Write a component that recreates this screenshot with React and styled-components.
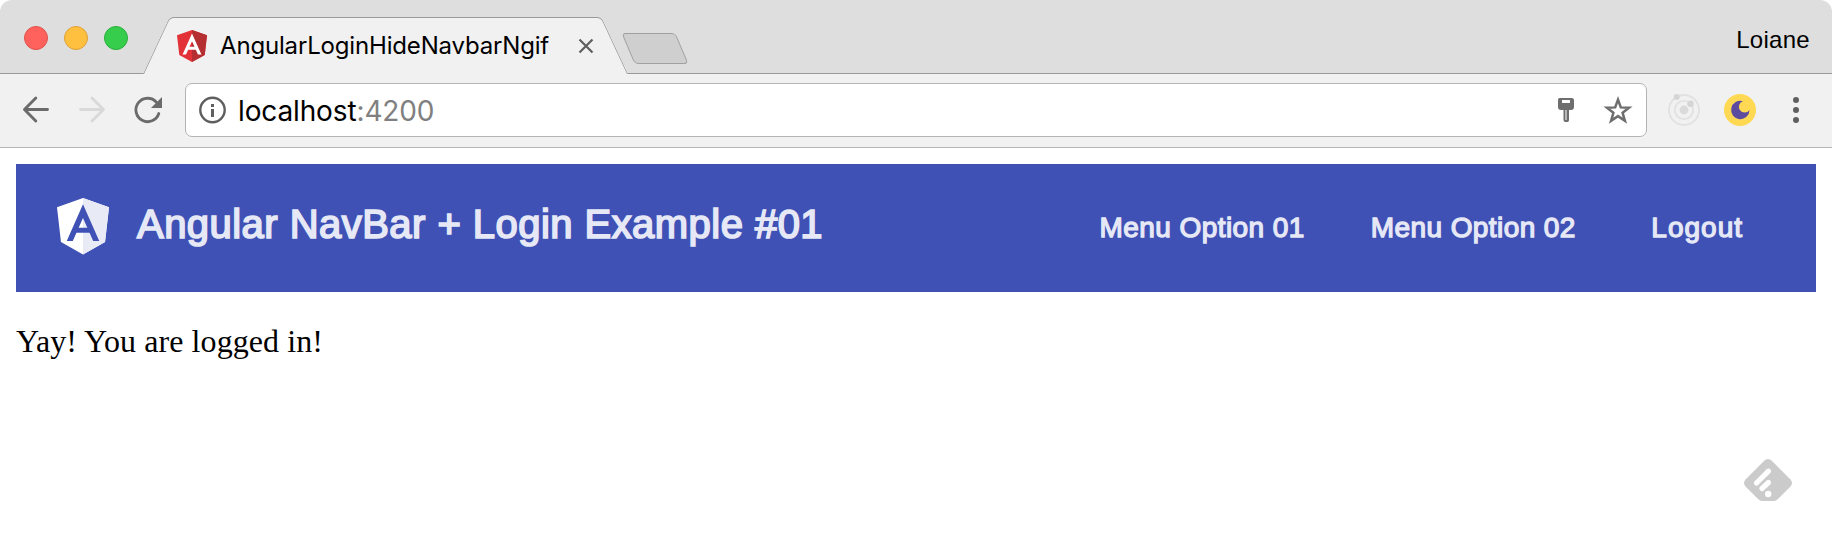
import React from 'react';
import styled, { createGlobalStyle } from 'styled-components';

const GlobalStyle = createGlobalStyle`
  *, *::before, *::after { box-sizing: border-box; }
  body { margin: 0; background: #fff; }
  svg { display: block; flex: none; }
`;

const Window = styled.div`
  position: relative;
  width: 1832px;
  height: 544px;
  overflow: hidden;
  background: #fff;
`;

const TabStrip = styled.header`
  display: flex;
  align-items: flex-end;
  height: 74px;
  padding: 0 22px 0 24px;
  background: #dedede;
  border-bottom: 1px solid #999;
  border-radius: 12px 12px 0 0;
`;

const TrafficLights = styled.div`
  display: flex;
  gap: 16px;
  margin-bottom: 23px;
`;

const Light = styled.span`
  width: 24px;
  height: 24px;
  border-radius: 50%;
  background: ${(p) => p.$fill};
  border: 1px solid ${(p) => p.$edge};
`;

const Tab = styled.div`
  position: relative;
  isolation: isolate;
  display: flex;
  align-items: center;
  width: 485px;
  height: 57px;
  margin: 0 0 -1px 15px;
  padding: 0 0 0 34px;

  &::before,
  &::after {
    content: '';
    position: absolute;
    z-index: -1;
    top: 0;
    bottom: 0;
    width: 55%;
    background: #f1f1f1;
    border-top: 1px solid #999;
  }
  &::before {
    left: 0;
    border-left: 1px solid #999;
    border-top-left-radius: 5px;
    transform: skewX(-25deg);
    transform-origin: bottom left;
  }
  &::after {
    right: 0;
    border-right: 1px solid #999;
    border-top-right-radius: 5px;
    transform: skewX(25deg);
    transform-origin: bottom right;
  }
`;

const TabTitle = styled.span`
  margin-left: 13px;
  width: 358px;
  font: 24px/30px Inter, sans-serif;
  letter-spacing: -0.17px;
  color: #000;
  white-space: nowrap;
`;

const NewTab = styled.span`
  width: 54px;
  height: 31px;
  margin: 0 0 9px -0.5px;
  background: #cfcfcf;
  border: 1px solid #a0a0a0;
  border-radius: 4px;
  transform: skewX(23deg);
`;

const Profile = styled.span`
  margin: 0 0 17px auto;
  font: 24px/32px 'Liberation Sans', Arial, sans-serif;
  letter-spacing: 0.3px;
  color: #000;
`;

const Toolbar = styled.div`
  display: flex;
  align-items: center;
  height: 74px;
  padding: 0 20px 2px;
  background: #f1f1f1;
  border-bottom: 1px solid #b4b4b4;
`;

const NavButtons = styled.div`
  display: flex;
  flex: none;
  gap: 24px;
  width: 165px;
`;

const AddressBar = styled.div`
  display: flex;
  align-items: center;
  width: 1462px;
  height: 54px;
  padding: 0 13px 0 12px;
  background: #fff;
  border: 1px solid #b4b4b4;
  border-radius: 7px;
`;

const Url = styled.span`
  flex: 1;
  margin: 2px 0 0 10px;
  font: 28px/36px Inter, sans-serif;
  letter-spacing: -0.13px;
  color: #000;
`;

const Port = styled.span`
  color: #808080;
`;

const AddressActions = styled.div`
  display: flex;
  gap: 23px;
`;

const Extensions = styled.div`
  display: flex;
  align-items: center;
  gap: 24px;
  margin-left: 21px;
`;

const Page = styled.main`
  padding: 16px;
`;

const NavBar = styled.nav`
  display: flex;
  align-items: center;
  height: 128px;
  padding: 0 73px 3px 41px;
  background: #3f51b5;
  color: #e6e8f6;
  font-family: 'Liberation Sans', Arial, sans-serif;
`;

const Brand = styled.h1`
  flex: 1;
  margin: 0 0 5px 28px;
  font-size: 40px;
  font-weight: 400;
  line-height: 48px;
  letter-spacing: 0.46px;
  -webkit-text-stroke: 1.7px #e6e8f6;
  white-space: nowrap;
`;

const Menu = styled.div`
  display: flex;
  gap: 66px;
  margin-top: 3px;
`;

const MenuLink = styled.a`
  margin-left: ${(p) => p.$offset || 0}px;
  font-size: 28px;
  line-height: 36px;
  letter-spacing: ${(p) => p.$tracking || 0.42}px;
  -webkit-text-stroke: 1.3px #e6e8f6;
  white-space: nowrap;
`;

const Message = styled.p`
  margin: 31px 0 0;
  font: 32px/37px 'Liberation Serif', 'Times New Roman', serif;
  letter-spacing: 0.08px;
  color: #000;
`;

const Watermark = styled.div`
  position: absolute;
  right: 40px;
  bottom: 43px;
`;

function AngularShield({ width, height, left, right, mark, id }) {
  return (
    <svg width={width} height={height} viewBox="31.9 30 186.2 200" preserveAspectRatio="none">
      <clipPath id={id}>
        <rect x="60" y="40" width="130" height="142.6" />
      </clipPath>
      <polygon fill={left} points="125,30 31.9,63.2 46.1,186.3 125,230 203.9,186.3 218.1,63.2" />
      <polygon fill={right} points="125,30 125,230 203.9,186.3 218.1,63.2" />
      <g clipPath={`url(#${id})`} fill="none" stroke={mark}>
        <polyline points="68.7,202.6 125,76.4 181.3,202.6" strokeWidth="19.8" strokeMiterlimit="10" />
        <line x1="98" y1="144.4" x2="152" y2="144.4" strokeWidth="18" />
      </g>
    </svg>
  );
}

const ArrowIcon = ({ color, flip }) => (
  <svg width="32" height="32" viewBox="0 0 32 32" fill="none" stroke={color} strokeWidth="2.9" strokeLinecap="round" strokeLinejoin="round">
    <path d={flip ? 'M4.5 15.5H27.3M16 4L27.5 15.5L16 27' : 'M27.5 15.5H4.7M15.8 4L4.5 15.5L15.8 27'} />
  </svg>
);

const ReloadIcon = () => (
  <svg width="32" height="32" viewBox="0 0 32 32">
    <path d="M26.8 19.5A11.7 11.7 0 1 1 24.4 8.2" fill="none" stroke="#6b6b6b" strokeWidth="2.8" strokeLinecap="round" />
    <path d="M30 3V14H19Z" fill="#6b6b6b" />
  </svg>
);

const InfoIcon = () => (
  <svg width="30" height="30" viewBox="0 0 30 30">
    <circle cx="14.5" cy="15" r="12.2" fill="none" stroke="#5f5f5f" strokeWidth="2.4" />
    <rect x="13" y="9" width="3" height="3" fill="#5f5f5f" />
    <rect x="13" y="14" width="3" height="8" fill="#5f5f5f" />
  </svg>
);

const KeyIcon = () => (
  <svg width="30" height="30" viewBox="0 0 30 30">
    <path fillRule="evenodd" fill="#6e6e6e" d="M9.5 3H21.5Q24 3 24 5V12Q24 15 21 15H19V25Q19 27 17.5 27H15.5Q13.5 27 13.5 25V15H11Q8 15 8 12V5Q8 3 9.5 3ZM12 5V8H20V5ZM15.5 15V25H16.5V15Z" />
  </svg>
);

const StarIcon = () => (
  <svg width="30" height="30" viewBox="0 0 30 30">
    <path fill="none" stroke="#6e6e6e" strokeWidth="2.5" d="M15 4.6L17.8 12.4L26.1 12.7L19.6 17.8L21.9 25.8L15 21.1L8.1 25.8L10.4 17.8L3.9 12.7L12.2 12.4Z" />
  </svg>
);

const OrbitIcon = () => (
  <svg width="32" height="32" viewBox="0 0 32 32">
    <circle cx="16" cy="16" r="15" fill="none" stroke="#e1e1e1" strokeWidth="1.8" />
    <circle cx="16" cy="16" r="9.2" fill="none" stroke="#e1e1e1" strokeWidth="1.8" />
    <circle cx="16" cy="16" r="4.4" fill="#dadada" />
    <circle cx="8.7" cy="3" r="3" fill="#d5d5d5" />
    <circle cx="22.5" cy="9.8" r="3.2" fill="#d5d5d5" />
  </svg>
);

const MoonIcon = () => (
  <svg width="32" height="32" viewBox="0 0 32 32">
    <circle cx="16" cy="16" r="16" fill="#ffd954" />
    <path fill="#5c4b9f" d="M19 7.2A9.2 9.2 0 1 0 25.5 16A5.8 5.8 0 1 1 19 7.2Z" />
  </svg>
);

const DotsIcon = () => (
  <svg width="32" height="32" viewBox="0 0 32 32" fill="#5f5f5f">
    <circle cx="16" cy="6" r="3" />
    <circle cx="16" cy="16" r="3" />
    <circle cx="16" cy="26" r="3" />
  </svg>
);

const FeedlyMark = () => (
  <svg width="48" height="42" viewBox="0 0 48 42">
    <path fill="#cbcbcb" d="M20.5 1.5Q24 -1.5 27.5 1.5L46.5 20.5Q49.5 24 46.5 27.5L34 40Q32 42 30 42H18Q16 42 14 40L1.5 27.5Q-1.5 24 1.5 20.5Z" />
    <g stroke="#fff" strokeWidth="5.2" strokeLinecap="round">
      <path d="M12.5 24L24.5 12.2" />
      <path d="M18 29.5L24.5 23.5" />
    </g>
    <circle cx="24.2" cy="35" r="3.2" fill="#fff" />
  </svg>
);

export default function App() {
  return (
    <>
      <GlobalStyle />
      <Window>
        <TabStrip>
          <TrafficLights>
            <Light $fill="#ff625c" $edge="#e2504a" />
            <Light $fill="#ffc040" $edge="#dfa035" />
            <Light $fill="#35cd4b" $edge="#27ae37" />
          </TrafficLights>
          <Tab>
            <AngularShield id="favicon" width={30} height={32} left="#e23237" right="#b52e31" mark="#fff" />
            <TabTitle>AngularLoginHideNavbarNgif</TabTitle>
            <svg width="16" height="16" viewBox="0 0 16 16">
              <path d="M1.5 1.5L14.5 14.5M14.5 1.5L1.5 14.5" stroke="#5f5f5f" strokeWidth="2.2" />
            </svg>
          </Tab>
          <NewTab />
          <Profile>Loiane</Profile>
        </TabStrip>
        <Toolbar>
          <NavButtons>
            <ArrowIcon color="#6b6b6b" />
            <ArrowIcon color="#d9d9d9" flip />
            <ReloadIcon />
          </NavButtons>
          <AddressBar>
            <InfoIcon />
            <Url>localhost<Port>:4200</Port></Url>
            <AddressActions>
              <KeyIcon />
              <StarIcon />
            </AddressActions>
          </AddressBar>
          <Extensions>
            <OrbitIcon />
            <MoonIcon />
            <DotsIcon />
          </Extensions>
        </Toolbar>
        <Page>
          <NavBar>
            <AngularShield id="brand" width={52} height={56.4} left="#fff" right="#e8eaf6" mark="#3f51b5" />
            <Brand>Angular NavBar + Login Example #01</Brand>
            <Menu>
              <MenuLink>Menu Option 01</MenuLink>
              <MenuLink>Menu Option 02</MenuLink>
              <MenuLink $offset={9.5} $tracking={1}>Logout</MenuLink>
            </Menu>
          </NavBar>
          <Message>Yay! You are logged in!</Message>
        </Page>
        <Watermark><FeedlyMark /></Watermark>
      </Window>
    </>
  );
}
